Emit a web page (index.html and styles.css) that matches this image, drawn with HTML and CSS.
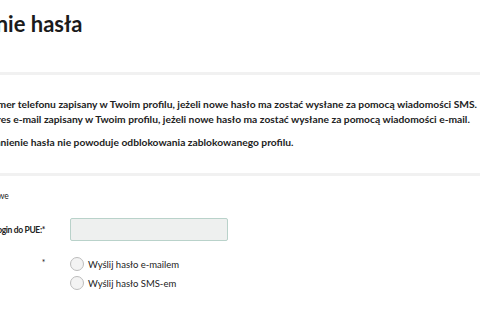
FILE: index.html
```html
<!DOCTYPE html>
<html lang="pl">
  <head>
    <meta charset="UTF-8" />
    <meta name="viewport" content="width=device-width, initial-scale=1.0" />
    <title>Przypomnienie hasła</title>
    <link rel="stylesheet" href="styles.css">
  </head>
  <body>
    <main class="page">
      <h1 class="title">Przypomnienie hasła</h1>
      <section class="info">
        <ul class="info-list">
          <li>numer telefonu zapisany w Twoim profilu, jeżeli nowe hasło ma zostać wysłane za pomocą wiadomości SMS.</li>
          <li>adres e-mail zapisany w Twoim profilu, jeżeli nowe hasło ma zostać wysłane za pomocą wiadomości e-mail.</li>
        </ul>
        <p class="info-note">Przypomnienie hasła nie powoduje odblokowania zablokowanego profilu.</p>
      </section>
      <form class="form">
        <p class="required">* pola obowiązkowe</p>
        <div class="row">
          <label class="label" for="login">Login do PUE:*</label>
          <input class="field" id="login" type="text" />
        </div>
        <div class="row row-radio">
          <span class="label">*</span>
          <div class="options">
            <label class="option"><span class="radio"></span>Wyślij hasło e-mailem</label>
            <label class="option"><span class="radio"></span>Wyślij hasło SMS-em</label>
          </div>
        </div>
      </form>
    </main>
  </body>
</html>
```

FILE: styles.css
```css
html {
  font-size: 10px;
}
body {
  margin: 0;
  overflow: hidden;
  font-family: Lato, "Liberation Sans", sans-serif;
  color: #222;
  background-color: #fff;
}
.page {
  width: 640px;
  margin-left: -42px;
}
.title {
  margin: 11px 0 0 -79px;
  font-size: 22px;
  font-weight: 700;
  line-height: 26px;
  color: #1b1b1b;
}
.info {
  margin-top: 35px;
  padding: 22px 0 23px;
  border-top: 3px solid #f1f1f1;
  border-bottom: 3px solid #f1f1f1;
}
.info-list {
  margin: 0;
  padding-left: 28px;
  list-style: none;
}
.info-list li {
  font-size: 10.25px;
  font-weight: 700;
  line-height: 15px;
}
.info-note {
  margin: 8px 0 0 2px;
  font-size: 10.25px;
  font-weight: 700;
  line-height: 15px;
}
.form {
  padding-top: 14px;
}
.required {
  margin: 0 0 0 -24px;
  font-size: 8.5px;
  line-height: 12px;
}
.row {
  display: flex;
  align-items: center;
  margin-top: 16px;
}
.label {
  width: 87px;
  text-align: right;
  font-size: 8.5px;
  font-weight: 700;
  letter-spacing: -0.35px;
}
.field {
  box-sizing: border-box;
  width: 158px;
  height: 23px;
  margin-left: 25px;
  border: 1px solid #b9d2ca;
  border-radius: 2px;
  background-color: #eef0ef;
}
.row-radio {
  align-items: flex-start;
  margin-top: 16px;
}
.row-radio .label {
  font-weight: 400;
  line-height: 12px;
}
.options {
  display: flex;
  flex-direction: column;
  gap: 5px;
  margin-left: 25px;
}
.option {
  display: flex;
  align-items: center;
  gap: 4px;
  font-size: 9.5px;
}
.radio {
  box-sizing: border-box;
  width: 14px;
  height: 14px;
  border: 1px solid #bcbcbc;
  border-radius: 50%;
  background-color: #f3f3f3;
}
```
